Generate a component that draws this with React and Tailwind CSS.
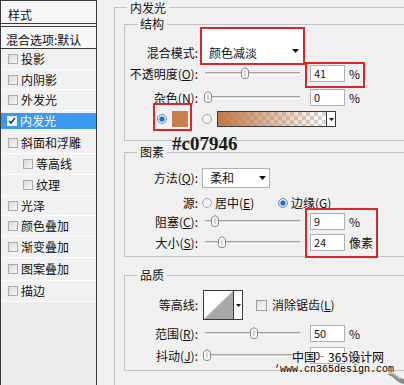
import React from "react";

const Arrow = ({ className = "" }) => (
  <svg width="7" height="4" viewBox="0 0 7 4" className={"shrink-0 " + className}>
    <path d="M0 0h7L3.5 4z" fill="#111" />
  </svg>
);

const Box = ({ checked }) =>
  checked ? (
    <div className="w-[10px] h-[10px] bg-white border border-[#e6f0fb] flex items-center justify-center shrink-0">
      <svg width="8" height="8" viewBox="0 0 8 8">
        <path d="M1 4l2 2 4-5" fill="none" stroke="#1b3d6e" strokeWidth="1.6" />
      </svg>
    </div>
  ) : (
    <div className="w-[10px] h-[10px] border border-[#ababab] bg-gradient-to-br from-[#d9d9d9] to-[#f7f7f7] shrink-0" />
  );

const Radio = ({ on }) => (
  <svg width="10" height="10" viewBox="0 0 10 10" className="shrink-0">
    <circle cx="5" cy="5" r="4.5" fill={on ? "#dbe8f6" : "#f3f3f3"} stroke={on ? "#7191b6" : "#a6a6a6"} />
    {on && <circle cx="5" cy="5" r="2.6" fill="#2270c4" />}
  </svg>
);

const Thumb = ({ x }) => (
  <svg className="absolute top-[-6px]" style={{ left: x - 4 }} width="8" height="12" viewBox="0 0 8 12">
    <path d="M0.5 3 L4 0.5 L7.5 3 V9.5 Q7.5 11.5 4 11.5 Q0.5 11.5 0.5 9.5 Z" fill="#f5f5f5" stroke="#8a8a8a" />
    <path d="M4 3.5 V9" stroke="#b5b5b5" />
  </svg>
);

const Slider = ({ v }) => (
  <div className="w-[112px] h-full flex items-center shrink-0">
    <div className="relative ml-[7px] w-[95px] h-[3px] border-t border-[#a2a2a2] border-b border-b-white bg-[#d8d8d8]">
      <Thumb x={v} />
    </div>
  </div>
);

const Field = ({ val, children }) => (
  <div className="relative w-[35px] h-[17px] border border-[#a9b1bb] bg-white pl-[3px] text-[11px] leading-[15px] shrink-0">
    {val}
    {children}
  </div>
);

const Label = ({ children }) => <div className="w-[73px] text-right shrink-0">{children}</div>;

const U = ({ children }) => <span className="underline">{children}</span>;

const Legend = ({ children, top = "top-[-9px]" }) => (
  <div className={"absolute left-[12px] px-[3px] bg-[#f0f0f0] leading-[16px] " + top}>{children}</div>
);

const leftRows = [
  { t: "投影", h: "h-[21px]" },
  { t: "内阴影", h: "h-[20px]" },
  { t: "外发光", h: "h-[21px]" },
  { t: "内发光", h: "h-[21px]", sel: true },
  { t: "斜面和浮雕", h: "h-[22px]" },
  { t: "等高线", h: "h-[21px]", ind: true },
  { t: "纹理", h: "h-[21px]", ind: true },
  { t: "光泽", h: "h-[20px]" },
  { t: "颜色叠加", h: "h-[21px]" },
  { t: "渐变叠加", h: "h-[21px]" },
  { t: "图案叠加", h: "h-[23px]" },
  { t: "描边", h: "h-[21px]" },
];

function LeftPanel() {
  return (
    <div className="w-[97px] h-[390px] shrink-0 border-l border-r border-t border-[#3a3a3a] bg-[#ececec] flex flex-col">
      <div className="h-[23px] border-b border-[#3a3a3a] bg-[#f7f7f7] pl-[7px] pt-[6px]">样式</div>
      <div className="h-[2px] bg-[#f7f7f7]" />
      <div className="h-[23px] border-t border-b border-[#3a3a3a] bg-[#f7f7f7] pl-[5px] pt-[5px]">混合选项:默认</div>
      {leftRows.map((r) => (
        <div key={r.t} className={r.h + " flex items-center border-b border-[#fbfbfb] bg-[#f1f1f1]"}>
          {r.sel ? (
            <div className="h-[16px] w-full bg-[#3a98ef] flex items-center text-white">
              <div className="ml-[6px]">
                <Box checked />
              </div>
              <span className="ml-[3px]">{r.t}</span>
            </div>
          ) : (
            <>
              <div className={r.ind ? "ml-[22px]" : "ml-[7px]"}>
                <Box />
              </div>
              <span className="ml-[3px]">{r.t}</span>
            </>
          )}
        </div>
      ))}
    </div>
  );
}

function Gradient() {
  return (
    <div className="ml-[5px] flex h-[16px] border border-[#3a3a3a] shrink-0">
      <svg width="108" height="14" viewBox="0 0 108 14">
        <defs>
          <pattern id="chk" width="8" height="8" patternUnits="userSpaceOnUse">
            <rect width="8" height="8" fill="#ffffff" />
            <rect width="4" height="4" fill="#d6d6d6" />
            <rect x="4" y="4" width="4" height="4" fill="#d6d6d6" />
          </pattern>
          <linearGradient id="gr" x1="0" x2="1" y1="0" y2="0">
            <stop offset="0" stopColor="#c07946" stopOpacity="1" />
            <stop offset="1" stopColor="#c07946" stopOpacity="0" />
          </linearGradient>
        </defs>
        <rect width="108" height="14" fill="url(#chk)" />
        <rect width="108" height="14" fill="url(#gr)" />
      </svg>
      <div className="w-[9px] border-l border-[#3a3a3a] bg-white flex items-center justify-center">
        <svg width="5" height="3" viewBox="0 0 5 3">
          <path d="M0 0h5L2.5 3z" fill="#111" />
        </svg>
      </div>
    </div>
  );
}

export default function App() {
  return (
    <div className="w-[404px] h-[385px] overflow-hidden bg-[#f0f0f0] flex relative font-['Noto_Sans_CJK_SC',sans-serif] text-[12px] leading-[16px] text-[#111]">
      <LeftPanel />
      <div className="flex-1 min-w-0">
        <div className="ml-[17px] mt-[7px] w-[320px] h-[400px] border-l border-t border-[#c2c2c2] relative">
          <Legend top="top-[-8px]">内发光</Legend>
          <div className="ml-[9px] mt-[16px] w-[320px]">
            {/* 结构 */}
            <div className="relative border border-[#c2c2c2] pb-[12px]">
              <Legend>结构</Legend>
              <div className="mt-[2px] h-[38px] flex items-end">
                <div className="w-[73px] text-right shrink-0 pb-[4px]">混合模式:</div>
                <div className="ml-[2px] w-[105px] h-[38px] border-2 border-[#d4282d] bg-white flex items-end pl-[7px] pb-[2px]">
                  <span>颜色减淡</span>
                  <Arrow className="ml-auto mr-[4px] mb-[8px]" />
                </div>
              </div>
              <div className="h-[17px] flex items-center">
                <Label>
                  不透明度(<U>O</U>):
                </Label>
                <Slider v={40} />
                <Field val="41">
                  <div className="absolute left-[-6px] top-[-4px] w-[60px] h-[26px] border-2 border-[#d4282d]" />
                </Field>
                <span className="ml-[4px]">%</span>
              </div>
              <div className="mt-[7px] h-[17px] flex items-center">
                <Label>
                  杂色(<U>N</U>):
                </Label>
                <Slider v={3} />
                <Field val="0" />
                <span className="ml-[4px]">%</span>
              </div>
              <div className="relative mt-[4px] h-[18px] flex items-center">
                <div className="absolute left-[28px] top-[-7px] w-[39px] h-[28px] border-2 border-[#d4282d]" />
                <div className="ml-[32px]">
                  <Radio on />
                </div>
                <div className="ml-[5px] w-[16px] h-[16px] bg-[#c6804d] shrink-0" />
                <div className="ml-[14px]">
                  <Radio />
                </div>
                <Gradient />
              </div>
            </div>

            <div className="relative h-[11px]">
              <span className="absolute left-[48px] top-[-7px] whitespace-nowrap font-['Liberation_Serif',serif] font-bold text-[19px] leading-[19px] text-[#1a1a1a]">
                #c07946
              </span>
            </div>

            {/* 图素 */}
            <div className="relative border border-[#c2c2c2] pb-[5px]">
              <Legend>图素</Legend>
              <div className="absolute left-[180px] top-[55px] w-[73px] h-[50px] border-2 border-[#d4282d]" />
              <div className="mt-[15px] h-[20px] flex items-center">
                <Label>
                  方法(<U>Q</U>):
                </Label>
                <div className="ml-[4px] w-[68px] h-[20px] border border-[#a9b1bb] bg-white flex items-center pl-[7px]">
                  <span>柔和</span>
                  <Arrow className="ml-auto mr-[3px]" />
                </div>
              </div>
              <div className="mt-[7px] h-[16px] flex items-center">
                <Label>源:</Label>
                <div className="ml-[4px] w-[76px] flex items-center shrink-0">
                  <Radio />
                  <span className="ml-[3px]">
                    居中(<U>E</U>)
                  </span>
                </div>
                <Radio on />
                <span className="ml-[3px]">
                  边缘(<U>G</U>)
                </span>
              </div>
              <div className="mt-[2px] h-[17px] flex items-center">
                <Label>
                  阻塞(<U>C</U>):
                </Label>
                <Slider v={10} />
                <Field val="9" />
                <span className="ml-[4px]">%</span>
              </div>
              <div className="mt-[4px] h-[17px] flex items-center">
                <Label>
                  大小(<U>S</U>):
                </Label>
                <Slider v={17} />
                <Field val="24" />
                <span className="ml-[4px]">像素</span>
              </div>
            </div>

            {/* 品质 */}
            <div className="relative mt-[18px] border border-[#c2c2c2] pb-[6px]">
              <Legend>品质</Legend>
              <div className="mt-[14px] h-[30px] flex items-center">
                <Label>等高线:</Label>
                <div className="ml-[5px] w-[40px] h-[30px] border border-[#3a3a3a] bg-white flex shrink-0">
                  <svg width="29" height="28" viewBox="0 0 29 28">
                    <path d="M0 28 L29 0 L29 28 Z" fill="#a9a9a9" />
                  </svg>
                  <div className="w-[9px] border-l border-[#3a3a3a] flex items-center justify-center">
                    <svg width="5" height="3" viewBox="0 0 5 3">
                      <path d="M0 0h5L2.5 3z" fill="#111" />
                    </svg>
                  </div>
                </div>
                <div className="ml-[13px] w-[11px] h-[11px] border border-[#9a9a9a] bg-gradient-to-br from-[#dedede] to-[#fafafa] shrink-0" />
                <span className="ml-[5px] whitespace-nowrap">
                  消除锯齿(<U>L</U>)
                </span>
              </div>
              <div className="mt-[5px] h-[17px] flex items-center">
                <Label>
                  范围(<U>R</U>):
                </Label>
                <Slider v={49} />
                <Field val="50" />
                <span className="ml-[4px]">%</span>
              </div>
              <div className="mt-[5px] h-[17px] flex items-center">
                <Label>
                  抖动(<U>J</U>):
                </Label>
                <Slider v={2} />
                <Field val="0" />
                <span className="ml-[4px]">%</span>
              </div>
            </div>
          </div>
        </div>
      </div>

      {/* watermark */}
      <div className="absolute left-[292px] top-[349px] whitespace-nowrap text-[12px] leading-[16px] text-black [text-shadow:0_0_2px_#fff,0_0_2px_#fff]">
        中国‐365设计网
      </div>
      <div className="absolute left-[274px] top-[364px] whitespace-nowrap font-['Liberation_Mono',monospace] text-[10px] leading-[12px] text-black [text-shadow:0_0_2px_#fff]">
        ‘www.cn365design.com
      </div>
      <svg className="absolute left-[386px] top-[371px]" width="18" height="14" viewBox="0 0 18 14">
        <path d="M1 3 Q6 5 10 9 Q13 12 18 13 L18 8 Q12 7 8 4 Q5 2 1 3 Z" fill="#8a8a8a" />
        <path d="M3 1 Q9 3 14 8" stroke="#b0b0b0" strokeWidth="1.5" fill="none" />
      </svg>
    </div>
  );
}
